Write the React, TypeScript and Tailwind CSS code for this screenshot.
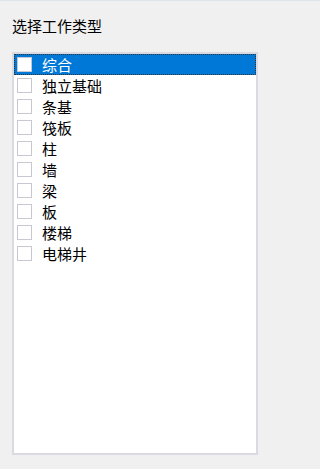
import { useState } from "react"

const items = ["综合", "独立基础", "条基", "筏板", "柱", "墙", "梁", "板", "楼梯", "电梯井"]

export default function App() {
  const [selected, setSelected] = useState(0)
  const [checked, setChecked] = useState<boolean[]>(items.map(() => false))

  return (
    <div
      className="w-full min-w-[264px] h-[469px] bg-[#f0f0f0] border-t border-[#dfe4ec] text-black"
      style={{ fontFamily: '"Noto Sans CJK SC", "Noto Sans", sans-serif' }}
    >
      {/* Title */}
      <div className="h-[51px] pl-[12px] pt-[16px] text-[15px] leading-[17px]">选择工作类型</div>

      {/* Checked list box */}
      <div className="ml-[12px] w-[246px] h-[403px] border-2 border-[#dadae3] bg-white">
        {items.map((name, i) => {
          const isSel = i === selected
          return (
            <div
              key={name}
              onClick={() => setSelected(i)}
              className={
                isSel
                  ? "h-[21px] flex items-center bg-[#0078d7] text-white outline-1 outline-dotted outline-[#333] -outline-offset-1"
                  : "h-[21px] flex items-center"
              }
            >
              <span
                onClick={() => setChecked(checked.map((c, j) => (j === i ? !c : c)))}
                className="ml-[3px] w-[15px] h-[15px] border border-[#c8c8d2] bg-white flex items-center justify-center text-[11px] text-black"
              >
                {checked[i] ? "✓" : ""}
              </span>
              <span className="ml-[10px] text-[15px] leading-[21px]">{name}</span>
            </div>
          )
        })}
      </div>
    </div>
  )
}
